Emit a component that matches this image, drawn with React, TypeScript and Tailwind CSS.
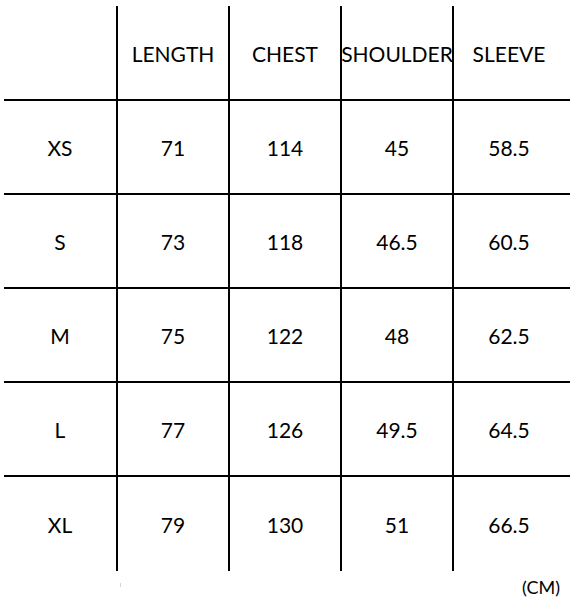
import React from 'react';

const headers = ['LENGTH', 'CHEST', 'SHOULDER', 'SLEEVE'];
const rows: [string, string, string, string, string][] = [
  ['XS', '71', '114', '45', '58.5'],
  ['S', '73', '118', '46.5', '60.5'],
  ['M', '75', '122', '48', '62.5'],
  ['L', '77', '126', '49.5', '64.5'],
  ['XL', '79', '130', '51', '66.5'],
];

function Row({ cells, last, height }: { cells: string[]; last?: boolean; height: string }) {
  return (
    <div className={`flex ${height} ${last ? '' : 'border-b-2 border-black'}`}>
      {cells.map((c, i) => (
        <div
          key={i}
          className={`w-[112px] shrink-0 flex items-center justify-center whitespace-nowrap pt-px ${i > 0 ? 'border-l-2 border-black' : ''}`}
        >
          {c}
        </div>
      ))}
      <div className="flex-1" />
    </div>
  );
}

export default function App() {
  return (
    <div
      className="w-[570px] h-[598px] bg-white text-black text-[21px] leading-none"
      style={{ fontFamily: 'Lato, "Open Sans", sans-serif' }}
    >
      <div className="pt-[6px] pl-[4px]">
        <Row cells={['', ...headers]} height="h-[95px]" />
        {rows.map((r, i) => (
          <Row key={r[0]} cells={r} last={i === rows.length - 1} height="h-[94px]" />
        ))}
      </div>
      <div className="relative flex justify-end pr-[10px] pt-[7px] text-[18px]">
        <span className="absolute left-[120px] top-[12px] w-px h-[4px] bg-gray-300" />
        <span>(CM)</span>
      </div>
    </div>
  );
}
